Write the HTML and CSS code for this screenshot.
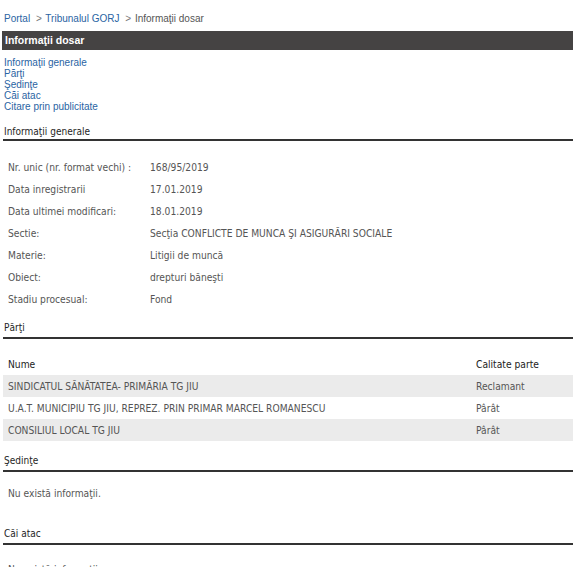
FILE: index.html
```html
<!DOCTYPE html>
<html lang="ro">
<head>
<meta charset="utf-8">
<title>Informaţii dosar</title>
<link rel="stylesheet" href="styles.css">
</head>
<body>
<div class="page">
  <div class="breadcrumb">
    <a href="#" class="crumb">Portal</a>
    <span class="sep">&gt;</span>
    <a href="#" class="crumb">Tribunalul GORJ</a>
    <span class="sep">&gt;</span>
    <span class="current">Informaţii dosar</span>
  </div>
  <div class="titlebar">Informaţii dosar</div>
  <ul class="toc">
    <li><a href="#">Informaţii generale</a></li>
    <li><a href="#">Părţi</a></li>
    <li><a href="#">Şedinţe</a></li>
    <li><a href="#">Căi atac</a></li>
    <li><a href="#">Citare prin publicitate</a></li>
  </ul>

  <h2 class="section-title first">Informaţii generale</h2>
  <table class="info">
    <tr><td class="label">Nr. unic (nr. format vechi) :</td><td>168/95/2019</td></tr>
    <tr><td class="label">Data inregistrarii</td><td>17.01.2019</td></tr>
    <tr><td class="label">Data ultimei modificari:</td><td>18.01.2019</td></tr>
    <tr><td class="label">Sectie:</td><td>Secţia CONFLICTE DE MUNCA ŞI ASIGURĂRI SOCIALE</td></tr>
    <tr><td class="label">Materie:</td><td>Litigii de muncă</td></tr>
    <tr><td class="label">Obiect:</td><td>drepturi băneşti</td></tr>
    <tr><td class="label">Stadiu procesual:</td><td>Fond</td></tr>
  </table>

  <h2 class="section-title parti">Părţi</h2>
  <table class="parties">
    <tr class="head"><th class="name">Nume</th><th class="role">Calitate parte</th></tr>
    <tr class="alt"><td>SINDICATUL SĂNĂTATEA- PRIMĂRIA TG JIU</td><td>Reclamant</td></tr>
    <tr><td>U.A.T. MUNICIPIU TG JIU, REPREZ. PRIN PRIMAR MARCEL ROMANESCU</td><td>Pârât</td></tr>
    <tr class="alt"><td>CONSILIUL LOCAL TG JIU</td><td>Pârât</td></tr>
  </table>

  <h2 class="section-title sedinte">Şedinţe</h2>
  <p class="empty">Nu există informaţii.</p>

  <h2 class="section-title cai">Căi atac</h2>
  <p class="empty last">Nu există informaţii.</p>
</div>
</body>
</html>
```

FILE: styles.css
```css
html, body {
  margin: 0;
  padding: 0;
  background: #ffffff;
}

body {
  font-family: "Liberation Sans", Arial, sans-serif;
  font-size: 10px;
  color: #555555;
}

.page {
  margin: 0 2px 0 3px;
  width: 570px;
}

.breadcrumb {
  padding-top: 12px;
  height: 14px;
  line-height: 14px;
  padding-left: 1px;
  font-size: 10px;
}

.breadcrumb .crumb {
  color: #2a64a3;
  text-decoration: none;
}

.breadcrumb .sep {
  color: #777777;
  margin: 0 1px 0 3px;
}

.breadcrumb .current {
  color: #555555;
}

.titlebar {
  margin-top: 5px;
  margin-left: -1px;
  height: 19px;
  line-height: 19px;
  background: #454343;
  color: #ffffff;
  font-weight: bold;
  font-size: 10.5px;
  padding-left: 3px;
}

.toc {
  list-style: none;
  margin: 7px 0 0 0;
  padding: 0 0 0 1px;
  line-height: 11px;
  font-size: 10px;
}

.toc a {
  color: #2a64a3;
  text-decoration: none;
}

.section-title {
  margin: 0;
  font-family: "DejaVu Sans Condensed", "DejaVu Sans", sans-serif;
  font-size: 10px;
  font-weight: normal;
  color: #1e1e1e;
  height: 14px;
  line-height: 14px;
  padding-left: 1px;
  border-bottom: 2px solid #333333;
}

.section-title.first { margin-top: 13px; }
.section-title.parti { margin-top: 11px; padding-bottom: 2px; }
.section-title.sedinte { margin-top: 13px; padding-bottom: 2px; }
.section-title.cai { margin-top: 22px; padding-bottom: 2px; }

table {
  border-collapse: collapse;
  width: 570px;
  font-family: "DejaVu Sans Condensed", "DejaVu Sans", sans-serif;
  font-size: 10.2px;
  color: #555555;
}

td, th {
  height: 22px;
  padding: 0 5px;
  vertical-align: middle;
  text-align: left;
  white-space: nowrap;
}

.info {
  margin-top: 15px;
}

.info .label {
  width: 132px;
}

.parties {
  margin-top: 14px;
}

.parties th {
  font-weight: normal;
  color: #222222;
}

.parties .name {
  width: 458px;
}

.parties tr.alt td {
  background: #ebebeb;
}

.empty {
  margin: 11px 0 0 0;
  height: 22px;
  line-height: 22px;
  padding-left: 5px;
  font-family: "DejaVu Sans Condensed", "DejaVu Sans", sans-serif;
  font-size: 10.2px;
  color: #555555;
}

.empty.last {
  margin-top: 14px;
}
```
